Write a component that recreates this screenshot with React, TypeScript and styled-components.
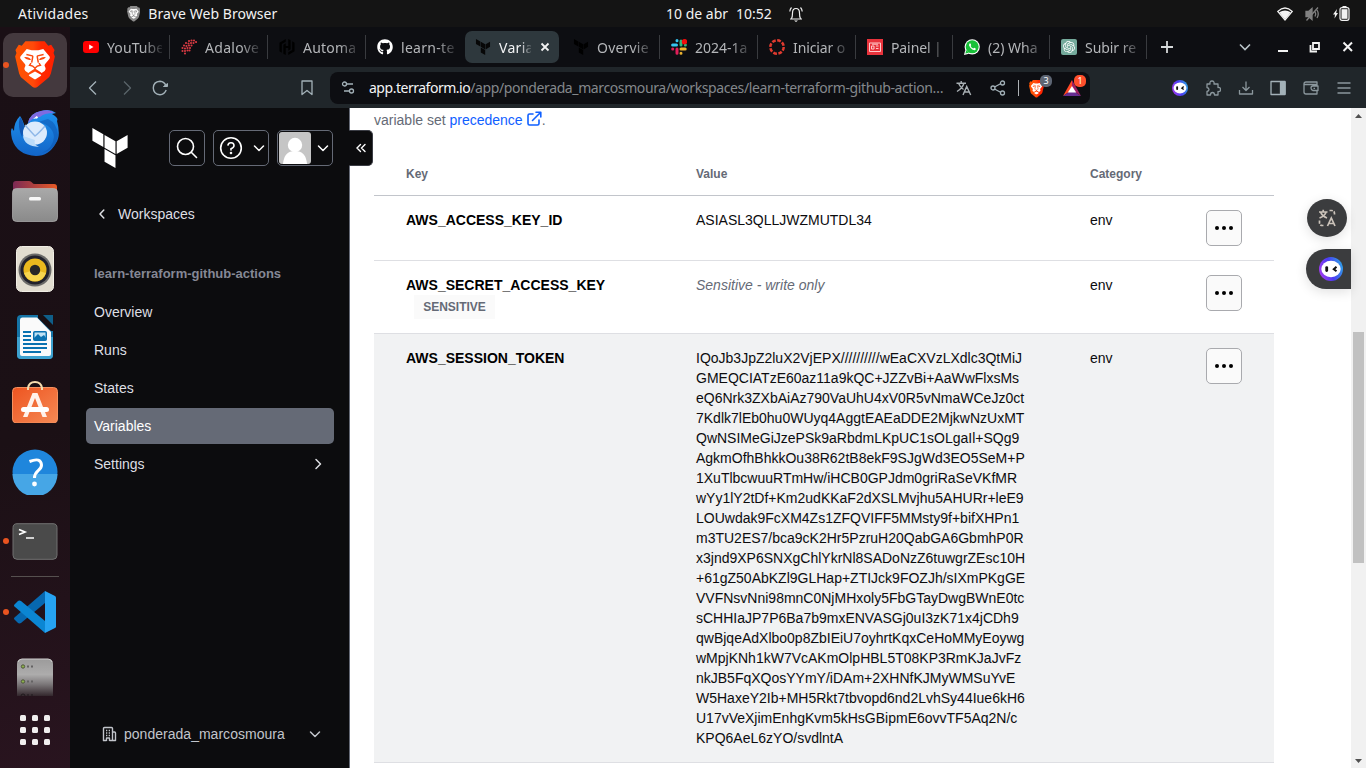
import React from "react";
import styled, { createGlobalStyle } from "styled-components";
import { SiTerraform, SiHashicorp, SiOpenai } from "react-icons/si";
import { FaGithub } from "react-icons/fa";

const uiFont = `"Noto Sans", "Open Sans", sans-serif`;
const pageFont = `"Liberation Sans", Arial, sans-serif`;

const GlobalStyle = createGlobalStyle`
  * { box-sizing: border-box; }
  body { margin: 0; overflow: hidden; background: #141414; }
  svg { display: block; flex: none; }
`;

/* ---------- shell ---------- */

const Desktop = styled.div`
  width: 1366px;
  height: 768px;
  display: flex;
  flex-direction: column;
  overflow: hidden;
  font-family: ${uiFont};
`;

const TopBar = styled.header`
  height: 27px;
  flex: none;
  background: #141414;
  color: #f2f2f2;
  display: grid;
  grid-template-columns: 666px 1fr auto;
  align-items: center;
  font-size: 14px;
`;

const TopLeft = styled.div`
  display: flex;
  align-items: center;
  padding-left: 18px;
`;

const TopText = styled.span<{ $spacing?: number; $width?: number }>`
  letter-spacing: ${(p) => p.$spacing ?? 0}px;
  width: ${(p) => (p.$width ? `${p.$width}px` : "auto")};
  white-space: nowrap;
`;

const AppName = styled.div`
  display: flex;
  align-items: center;
  gap: 8px;
`;

const Clock = styled.div`
  display: flex;
  align-items: center;
`;

const Tray = styled.div`
  display: flex;
  align-items: center;
  gap: 12px;
  padding-right: 16px;
`;

const Workspace = styled.div`
  flex: 1;
  display: flex;
  min-height: 0;
`;

/* ---------- dock ---------- */

const Dock = styled.aside`
  width: 70px;
  flex: none;
  background: linear-gradient(165deg, #1a0f15 0%, #1b1015 55%, #29141f 100%);
  display: flex;
  flex-direction: column;
  padding-top: 4px;
`;

const DockSlot = styled.div<{ $height?: number; $align?: string; $lift?: number }>`
  height: ${(p) => p.$height ?? 68}px;
  flex: none;
  position: relative;
  display: flex;
  align-items: ${(p) => p.$align ?? "center"};
  justify-content: center;
  padding-bottom: ${(p) => p.$lift ?? 0}px;
`;

const DockTile = styled.div`
  width: 64px;
  height: 64px;
  border-radius: 10px;
  background: #44393e;
  display: flex;
  align-items: center;
  justify-content: center;
`;

const RunningDot = styled.i`
  position: absolute;
  left: 3px;
  top: calc(50% - 3px);
  width: 6px;
  height: 6px;
  border-radius: 50%;
  background: #e95420;
`;

const DockRule = styled.div`
  width: 48px;
  height: 1px;
  margin: 1px auto 2px;
  background: #56504f;
`;

const AppsGrid = styled.div`
  display: grid;
  grid-template-columns: repeat(3, 6px);
  gap: 6px;
  i {
    height: 6px;
    border-radius: 1.5px;
    background: #f0eeee;
  }
`;

/* ---------- browser chrome ---------- */

const Browser = styled.div`
  flex: 1;
  min-width: 0;
  display: flex;
  flex-direction: column;
`;

const TabStrip = styled.div`
  height: 40px;
  flex: none;
  background: #0d0e12;
  display: flex;
  align-items: center;
  padding-left: 2px;
`;

const TabItem = styled.div<{ $rule?: boolean; $narrow?: boolean }>`
  width: ${(p) => (p.$narrow ? 97 : 98)}px;
  height: 24px;
  flex: none;
  display: flex;
  align-items: center;
  gap: 8px;
  padding-left: 11px;
  color: #b4b6b9;
  border-right: 1px solid ${(p) => (p.$rule ? "#393b3f" : "transparent")};
`;

const ActiveTab = styled(TabItem)`
  width: 94px;
  height: 32px;
  margin: 0 3px 0 1px;
  padding-left: 10px;
  border: 0;
  border-radius: 7px;
  background: #2e383d;
  color: #f2f3f4;
`;

const TabText = styled.span<{ $width: number; $spacing?: number }>`
  width: ${(p) => p.$width}px;
  flex: none;
  overflow: hidden;
  white-space: nowrap;
  font-size: 14px;
  letter-spacing: ${(p) => p.$spacing ?? 0.2}px;
  -webkit-mask-image: linear-gradient(90deg, #000 65%, rgba(0, 0, 0, 0.15) 100%);
  mask-image: linear-gradient(90deg, #000 65%, rgba(0, 0, 0, 0.15) 100%);
`;

const Favicon = styled.span`
  width: 16px;
  height: 16px;
  flex: none;
  display: flex;
  align-items: center;
  justify-content: center;
`;

const WindowControls = styled.div`
  margin-left: auto;
  display: flex;
  align-items: center;
  padding-right: 12px;
`;

const ToolBar = styled.div`
  height: 41px;
  flex: none;
  background: #20262a;
  color: #a3b1b8;
  display: flex;
  align-items: center;
`;

const NavButtons = styled.div`
  width: 260px;
  display: flex;
  align-items: center;
  padding-left: 15px;
`;

const Gap = styled.span<{ $size?: number }>`
  flex: ${(p) => (p.$size ? `0 0 ${p.$size}px` : "1")};
`;

const AddressBar = styled.div`
  width: 760px;
  height: 32px;
  flex: none;
  border-radius: 8px;
  background: #0d0e12;
  display: flex;
  align-items: center;
  padding-left: 10px;
`;

const Url = styled.div`
  width: 600px;
  flex: none;
  padding-left: 13px;
  font-size: 14px;
  color: #84888c;
  white-space: nowrap;
`;

const Host = styled.span`
  color: #f4f5f6;
  letter-spacing: -0.48px;
`;

const UrlPath = styled.span`
  letter-spacing: -0.39px;
`;

const BarRule = styled.span`
  width: 1px;
  height: 16px;
  flex: none;
  background: #aeb2b5;
  margin: 0 10px 0 12px;
`;

const ShieldWrap = styled.span`
  position: relative;
  display: block;
  flex: none;
  width: 34px;
  height: 24px;
  padding-top: 4px;
`;

const CountBadge = styled.b<{ $color: string }>`
  position: absolute;
  left: 11px;
  top: -1px;
  width: 12px;
  height: 12px;
  border-radius: 5px;
  background: ${(p) => p.$color};
  color: #fff;
  font: 9px/12px ${uiFont};
  text-align: center;
`;

const Extensions = styled.div`
  margin-left: auto;
  display: flex;
  align-items: center;
  gap: 16.8px;
  padding-right: 14px;
`;

/* ---------- page ---------- */

const Page = styled.div`
  flex: 1;
  min-height: 0;
  display: flex;
  position: relative;
  font-family: ${pageFont};
  font-size: 14px;
  line-height: 20px;
`;

const SideNav = styled.nav`
  width: 280px;
  flex: none;
  background: #0c0c0e;
  border-right: 1px solid #656a76;
  color: #dedfe3;
  display: flex;
  flex-direction: column;
  position: relative;
`;

const NavHeader = styled.div`
  display: flex;
  align-items: center;
  padding: 20px 0 0 20px;
`;

const HeaderActions = styled.div`
  display: flex;
  gap: 8px;
  margin-left: 39px;
`;

const HeaderButton = styled.div<{ $wide?: boolean }>`
  width: ${(p) => (p.$wide ? 56 : 36)}px;
  height: 36px;
  border: 1px solid #656a76;
  border-radius: 5px;
  display: flex;
  align-items: center;
  justify-content: ${(p) => (p.$wide ? "space-between" : "center")};
  padding: ${(p) => (p.$wide ? "0 1px 0 5px" : "0")};
  color: #fff;
`;

const UserButton = styled(HeaderButton)`
  padding-left: 1px;
`;

const CollapseTab = styled.div`
  position: absolute;
  left: 279px;
  top: 22px;
  width: 24px;
  height: 36px;
  border: 1px solid #3b3d45;
  border-left: 0;
  border-radius: 0 5px 5px 0;
  background: #0c0c0e;
  display: flex;
  align-items: center;
  justify-content: center;
`;

const BackLink = styled.div`
  display: flex;
  align-items: center;
  gap: 8px;
  padding: 36px 0 0 24px;
`;

const NavTitle = styled.div`
  margin: 41px 0 11px 24px;
  font-size: 13px;
  line-height: 18px;
  font-weight: 700;
  color: #858895;
`;

const NavItem = styled.div<{ $active?: boolean }>`
  height: 36px;
  margin: 0 15px 2px 16px;
  padding: 0 8px;
  border-radius: 5px;
  display: flex;
  align-items: center;
  justify-content: space-between;
  background: ${(p) => (p.$active ? "#656a76" : "transparent")};
  color: ${(p) => (p.$active ? "#fff" : "#dedfe3")};
`;

const OrgSwitcher = styled.div`
  margin-top: auto;
  height: 68px;
  padding: 0 26px 0 32px;
  display: flex;
  align-items: center;
  gap: 6px;
  color: #c2c5cb;
`;

const OrgName = styled.span`
  flex: 1;
  letter-spacing: 0.02px;
`;

const Main = styled.main`
  flex: 1;
  min-width: 0;
  background: #fff;
  padding: 2px 77px 0 24px;
  overflow: hidden;
`;

const Intro = styled.p`
  margin: 0;
  height: 20px;
  display: flex;
  color: #656a76;
  white-space: pre;
`;

const IntroLink = styled.a`
  display: flex;
  gap: 4px;
  color: #1060ff;
  svg {
    margin-top: 1px;
  }
`;

const gridColumns = "290px 394px 116px 1fr";

const TableHead = styled.div`
  display: grid;
  grid-template-columns: ${gridColumns};
  height: 66px;
  padding: 34px 0 0 32px;
  border-bottom: 1px solid #c2c5cb;
  font-size: 12px;
  line-height: 20px;
  font-weight: 700;
  color: #656a76;
`;

const Row = styled.div<{ $shaded?: boolean }>`
  display: grid;
  grid-template-columns: ${gridColumns};
  padding: 14px 0 14px 32px;
  border-bottom: 1px solid #dedfe3;
  background: ${(p) => (p.$shaded ? "#f1f2f3" : "#fff")};
  color: #0c0c0e;
`;

const KeyCell = styled.div`
  font-weight: 700;
  color: #000;
`;

const Badge = styled.div`
  width: 81px;
  height: 24px;
  margin-left: 8px;
  background: #fafafa;
  color: #656a76;
  font-size: 12px;
  line-height: 24px;
  text-align: center;
`;

const ValueCell = styled.div<{ $muted?: boolean }>`
  white-space: pre;
  font-style: ${(p) => (p.$muted ? "italic" : "normal")};
  color: ${(p) => (p.$muted ? "#656a76" : "#0c0c0e")};
`;

const MoreButton = styled.div`
  width: 36px;
  height: 36px;
  border: 1px solid #a9aaae;
  border-radius: 5px;
  background: #fafafa;
  display: flex;
  align-items: center;
  justify-content: center;
`;

const Scrollbar = styled.div`
  width: 15px;
  flex: none;
  background: #f1f1f1;
  display: flex;
  flex-direction: column;
  align-items: center;
  padding: 6px 0 5px;
`;

const Thumb = styled.div`
  width: 11px;
  height: 231px;
  margin-top: 214px;
  margin-bottom: auto;
  background: #c1c1c1;
`;

const TranslateBubble = styled.div`
  position: absolute;
  right: 19px;
  top: 91px;
  width: 40px;
  height: 38px;
  border-radius: 50%;
  background: #3b3c3e;
  display: flex;
  align-items: center;
  justify-content: center;
  box-shadow: 0 3px 12px rgba(0, 0, 0, 0.12);
`;

const BotBubble = styled.div`
  position: absolute;
  right: 15px;
  top: 141px;
  width: 45px;
  height: 40px;
  padding-left: 13px;
  border-radius: 20px 0 0 20px;
  background: #3b3c3e;
  display: flex;
  align-items: center;
  box-shadow: 0 3px 12px rgba(0, 0, 0, 0.12);
`;

/* ---------- drawings ---------- */

function BraveIcon({ height = 48, body = "url(#braveBody)", face = "#fff", ink = "#fb4a0e" }) {
  return (
    <svg width={(height * 40) / 48} height={height} viewBox="0 0 120 145">
      <defs>
        <linearGradient id="braveBody" x1="0" x2="1">
          <stop offset="0" stopColor="#ff5500" />
          <stop offset=".45" stopColor="#ff4a0a" />
          <stop offset=".65" stopColor="#ff2a00" />
          <stop offset="1" stopColor="#ff2000" />
        </linearGradient>
      </defs>
      <path d="M31 1H89L100 14L109 11L119 27L116 36L120 47L108 98Q105 109 96 115L68 138Q60 145 52 138L24 115Q15 109 12 98L0 47L4 36L1 27L11 11L20 14Z" fill={body} />
      <path d="M35 24L50 28H70L85 24L104 47Q107 51 102 56L90 70Q87 74 91 79Q95 86 89 91L80 97L72 91L60 83L48 91L40 97L31 91Q25 86 29 79Q33 74 30 70L18 56Q13 51 16 47Z" fill={face} />
      <path d="M60 92L78 102Q80 104 77 106L64 114Q60 117 56 114L43 106Q40 104 42 102Z" fill={face} />
      <path d="M34 41L52 45Q54 46 53 49L50 65M86 41L68 45Q66 46 67 49L70 65M48 67L44 73Q54 74 60 82Q66 74 76 73L72 67M60 82V90" fill="none" stroke={ink} strokeWidth="4.500" />
      <path d="M27 49Q42 47 48 57Q36 60 27 49ZM93 49Q78 47 72 57Q84 60 93 49Z" fill={ink} />
    </svg>
  );
}

function ThunderbirdIcon() {
  return (
    <svg width="50" height="48" viewBox="0 0 50 48">
      <defs>
        <linearGradient id="tb" x1="0" y1="0" x2="0" y2="1">
          <stop offset="0" stopColor="#1f93ef" />
          <stop offset="1" stopColor="#1265c8" />
        </linearGradient>
      </defs>
      <path d="M10 7Q13 11 15 19L18 14Q20 4 31 2Q40-1 46 4L42 5Q49 9 47 12Q51 27 46 34Q39 47 26 47Q7 46 2 30Q0 21 2 19L4 22Q4 13 10 7Z" fill="url(#tb)" />
      <path d="M10 8Q14 13 14 20L12 28Q7 17 10 8Z" fill="#1157b3" />
      <path d="M18 14Q20 4 31 2Q40 0 44 4Q34 4 30 8Q23 8 18 14Z" fill="#7f6be0" />
      <path d="M28 13Q43 16 44 28Q43 39 32 44Q47 40 48 26Q47 14 38 10Z" fill="#0d55b0" opacity=".55" />
      <ellipse cx="25" cy="24" rx="12" ry="11.500" fill="#dcebfc" />
      <path d="M13 27Q14 37 29 38Q23 35 25 31Z" fill="#bcdcfa" />
      <path d="M15 16Q22 24 25 27Q29 24 35 17" fill="none" stroke="#8eb7e8" strokeWidth="1.400" />
      <path d="M23 10L27 7L28 9Z" fill="#fff" />
      <circle cx="26.500" cy="8.500" r="1" fill="#fff" />
    </svg>
  );
}

function FilesIcon() {
  return (
    <svg width="46" height="42" viewBox="0 0 46 42">
      <defs>
        <linearGradient id="fb" x1="0" x2="1">
          <stop offset="0" stopColor="#7b2a55" />
          <stop offset="1" stopColor="#e85a26" />
        </linearGradient>
        <linearGradient id="ff" x1="0" y1="0" x2="0" y2="1">
          <stop offset="0" stopColor="#a9a9a9" />
          <stop offset="1" stopColor="#8a8a8a" />
        </linearGradient>
      </defs>
      <path d="M1 4Q1 1 4 1H17Q19 1 20 2.500T23 4H42Q45 4 45 7V20H1Z" fill="url(#fb)" />
      <rect x=".5" y="8.500" width="45" height="33" rx="4" fill="url(#ff)" stroke="#b5b5b5" strokeWidth=".7" />
      <rect x="17" y="17" width="12" height="3.500" rx="1.500" fill="#f8f8f8" />
    </svg>
  );
}

function SpeakerIcon() {
  return (
    <svg width="38" height="46" viewBox="0 0 38 46">
      <rect x=".5" y=".5" width="37" height="45" rx="5" fill="#e2ddd0" stroke="#f1eee5" />
      <circle cx="19" cy="24" r="16.500" fill="#6c6b69" />
      <circle cx="19" cy="24" r="14.500" fill="#22222c" />
      <circle cx="19" cy="24" r="11.500" fill="#eab91e" />
      <path d="M8 27A11.500 11.500 0 0030 27L19 24Z" fill="#f7d64e" />
      <circle cx="19" cy="24" r="5.200" fill="#272727" />
    </svg>
  );
}

function WriterIcon() {
  return (
    <svg width="38" height="46" viewBox="0 0 38 46">
      <rect x="1" y="1" width="36" height="44" rx="4" fill="#1574a6" />
      <path d="M1 23H37V41Q37 45 33 45H5Q1 45 1 41Z" fill="#3da1cf" />
      <path d="M4 6Q4 3.500 6.500 3.500H21L35 18V40Q35 42 33 42H6Q4 42 4 40Z" fill="#fafafa" />
      <path d="M22 0H29L38 10V17L35 17L22 4Z" fill="#170f14" />
      <path d="M27 1H37V11Z" fill="#0f5e88" />
      <path d="M7 18H15M7 22H15M7 26H15M7 30H31M7 34H31M7 38H25" stroke="#0a72b0" strokeWidth="2" />
      <rect x="17.750" y="17.750" width="12.500" height="8.500" rx="1" fill="#bfe2f4" stroke="#0a72b0" strokeWidth="1.500" />
      <path d="M18 26V24L22 20L25 23L28 21L30 24V26Z" fill="#0a72b0" />
    </svg>
  );
}

function SoftwareIcon() {
  return (
    <svg width="46" height="42" viewBox="0 0 46 42">
      <defs>
        <linearGradient id="sw" x1="0" y1="0" x2="1" y2="1">
          <stop offset="0" stopColor="#ee5420" />
          <stop offset="1" stopColor="#f58a55" />
        </linearGradient>
      </defs>
      <rect x=".5" y="6.500" width="45" height="35.500" rx="4" fill="url(#sw)" stroke="#f5915f" />
      <path d="M16 9V7Q17 1 23 1T30 7V9" fill="none" stroke="#f6dcae" strokeWidth="2" />
      <path d="M20.500 12H25.500L35 36H30.500L23 17L15.500 36H11Z" fill="#fff1ea" />
      <rect x="9" y="26" width="28" height="5" rx="2.500" fill="#fff" />
    </svg>
  );
}

function HelpDockIcon() {
  return (
    <svg width="46" height="46" viewBox="0 0 46 46">
      <circle cx="23" cy="23" r="22.500" fill="#1f86dc" />
      <path d="M.5 25A22.500 22.500 0 0045.500 25Z" fill="#46a6e6" />
      <path d="M17.500 12.500Q29 8 29.500 16C29.500 22 22.500 21 22.500 29" fill="none" stroke="#fff" strokeWidth="3" />
      <circle cx="22.500" cy="35" r="2.400" fill="#fff" />
    </svg>
  );
}

function TerminalIcon() {
  return (
    <svg width="46" height="37" viewBox="0 0 46 37">
      <rect x="1" y=".7" width="44" height="35.600" rx="4" fill="#4a4a4a" stroke="#717171" />
      <path d="M7 6.500L13 9L7 11.500" fill="none" stroke="#fff" strokeWidth="1.700" />
      <path d="M14 15H22" stroke="#fff" strokeWidth="1.500" />
    </svg>
  );
}

function CodeIcon() {
  return (
    <svg width="42" height="42" viewBox="0 0 42 42">
      <path d="M31 0V12L7 32Q5 33 3.500 31.500L.5 28.500Q-.5 27.500 .5 26.500Z" fill="#0768b0" />
      <path d="M31 42V30L7 10Q5 9 3.500 10.500L.5 13.500Q-.5 14.500 .5 15.500Z" fill="#0b86d3" />
      <path d="M31 0L41 5Q42 5.500 42 6.500V35.500Q42 36.500 41 37L31 42Z" fill="#26a3f2" />
    </svg>
  );
}

function DriveIcon() {
  return (
    <svg width="38" height="38" viewBox="0 0 38 38">
      <defs>
        <linearGradient id="dr" x1="0" y1="0" x2="0" y2="1">
          <stop offset="0" stopColor="#9c9b9b" />
          <stop offset=".42" stopColor="#adacac" />
          <stop offset=".68" stopColor="#7c787a" />
          <stop offset="1" stopColor="#33272d" />
        </linearGradient>
      </defs>
      <path d="M1 38V6Q1 1 6 1H32Q37 1 37 6V38Z" fill="url(#dr)" />
      <path d="M2 4Q3 1 6 1H32Q35 1 36 4" fill="none" stroke="#cfcfcf" />
      <g fill="#8cb24a" stroke="#50553f">
        <circle cx="7" cy="8.500" r="1.700" />
        <circle cx="7" cy="23.500" r="1.700" />
      </g>
      <path d="M11 8.500H13M15 8.500H17M11 23.500H13M15 23.500H17" stroke="#646263" strokeWidth="2" />
      <path d="M5 38A2 2 0 019 38M11 37H13M15 37H17" stroke="#1f191c" fill="none" />
    </svg>
  );
}

function SlackIcon() {
  return (
    <svg width="16" height="16" viewBox="0 0 16 16" strokeLinecap="round" strokeWidth="3">
      <path d="M1.600 6H5.500M6 1.600V1.700" stroke="#36c5f0" />
      <path d="M10 2V6M14.400 6H14.300" stroke="#2eb67d" />
      <path d="M6 10V14.200M1.700 10H1.800" stroke="#e01e5a" />
      <path d="M10 10H14.200M10 14.200V14.300" stroke="#ecb22e" />
      <circle cx="13.500" cy="2.700" r="2.700" fill="#f30b0b" />
    </svg>
  );
}

function AdaloveIcon() {
  const dots = [
    [8, 2], [10.5, 1.5], [13, 1.5], [15, 3], [5, 4], [7.5, 4.5], [10, 4], [12.5, 4],
    [3, 6.5], [5.5, 7], [8, 6.5], [10.5, 6.5], [1.5, 9], [4, 9.5], [6.5, 9], [9, 9],
    [1.5, 12], [4, 12], [6.5, 11.5], [8.5, 11.5], [4, 14.5],
  ];
  return (
    <svg width="16" height="16" viewBox="0 0 16 16" fill="#d63a43">
      {dots.map(([x, y]) => <circle key={`${x}-${y}`} cx={x} cy={y} r="1.050" />)}
    </svg>
  );
}

function BotFace({ size }: { size: number }) {
  return (
    <svg width={size} height={size} viewBox="0 0 24 24">
      <defs>
        <linearGradient id="bot" x1="0" y1=".7" x2="1" y2=".4">
          <stop offset="0" stopColor="#a63bf0" />
          <stop offset=".5" stopColor="#4b3df2" />
          <stop offset="1" stopColor="#2f9de8" />
        </linearGradient>
      </defs>
      <circle cx="12" cy="12" r="12" fill="url(#bot)" />
      <ellipse cx="12" cy="12" rx="9.700" ry="8.200" fill="#fff" />
      <rect x="6.300" y="9.300" width="2.800" height="5.600" rx="1.300" fill="#111" />
      <path d="M17.500 9.800L14.800 12.200L17.500 14.200" fill="none" stroke="#111" strokeWidth="2" />
    </svg>
  );
}

function Chevron({ dir, size = 16, color = "currentColor", width = 1.5 }: { dir: "l" | "r" | "d"; size?: number; color?: string; width?: number }) {
  const paths = { l: "M9.800 4L6 8L9.800 12", r: "M6 3.500L10.500 8L6 12.500", d: "M3.500 6L8 10.500L12.500 6" };
  return (
    <svg width={size} height={size} viewBox="0 0 16 16">
      <path d={paths[dir]} fill="none" stroke={color} strokeWidth={width} strokeLinecap="round" strokeLinejoin="round" />
    </svg>
  );
}

function Line({ d, size = 16, color = "currentColor", width = 1.3, children }: { d: string; size?: number; color?: string; width?: number; children?: React.ReactNode }) {
  return (
    <svg width={size} height={size} viewBox="0 0 16 16" fill="none" stroke={color} strokeWidth={width} strokeLinejoin="round">
      <path d={d} />
      {children}
    </svg>
  );
}

function TranslateIcon() {
  return (
    <svg width="16" height="16" viewBox="0 0 16 16" fill="none" stroke="#a9b0b4" strokeWidth="1.400">
      <path d="M.5 3.200H10M5.200 1V3.200M8 3.200Q6.500 8 1 11.500M2.600 3.500Q4.500 7.500 7.500 9.500M7 15L10.700 6.500L14.700 15M8.300 12H13.300" />
    </svg>
  );
}

function TranslateSwapIcon() {
  return (
    <svg width="18" height="18" viewBox="0 0 18 18" fill="none" stroke="#cbc3ba" strokeWidth="1.700">
      <path d="M1 3H9.500M5.200 .8V3M8 3Q7 7 1.500 9M2.700 3.500Q4.500 7.500 9 9M9.500 17L13.300 9L17 17M10.800 14.500H15.800" />
      <path d="M11.500 1.500H13.500Q16.500 1.500 16.500 4.500V6.500M1.500 11.500V13.500Q1.500 16.500 4.500 16.500H6.500" strokeDasharray="3.200 1.300" />
    </svg>
  );
}

/* ---------- data ---------- */

type TabData = { id: string; text: string; icon: React.ReactNode; rule?: boolean; active?: boolean; narrow?: boolean; spacing?: number };

const tabs: TabData[] = [
  {
    id: "yt", text: "YouTube", rule: true, spacing: 0.1,
    icon: <svg width="16" height="12" viewBox="0 0 16 12"><rect width="16" height="12" rx="3" fill="#f00" /><path d="M6.200 3.500L10.500 6L6.200 8.500Z" fill="#fff" /></svg>,
  },
  { id: "ada", text: "Adalove", rule: true, icon: <AdaloveIcon />, spacing: 0.3 },
  { id: "auto", text: "Automa", rule: true, icon: <SiHashicorp size={16} color="#000" /> },
  { id: "gh", text: "learn-te", icon: <FaGithub size={16} color="#fff" />, spacing: 0.3 },
  { id: "var", text: "Varia", active: true, icon: <SiTerraform size={16} color="#070707" />, spacing: 0.3 },
  { id: "ov", text: "Overvie", rule: true, icon: <SiTerraform size={16} color="#000" /> },
  { id: "slack", text: "2024-1a", rule: true, icon: <SlackIcon />, spacing: 0 },
  {
    id: "canvas", text: "Iniciar o", rule: true, spacing: -0.1,
    icon: <svg width="16" height="16" viewBox="0 0 16 16"><circle cx="8" cy="8" r="6.700" fill="none" stroke="#e03a2f" strokeWidth="2.500" strokeDasharray="3.760 1.500" /></svg>,
  },
  {
    id: "painel", text: "Painel |", rule: true, narrow: true, spacing: -0.1,
    icon: <svg width="16" height="16" viewBox="0 0 16 16"><rect width="16" height="16" fill="#e8333c" /><path d="M2.500 4H13.500V12.500H2.500ZM4.500 7H7V10H4.500ZM9 7H11.500M9 9.500H11.500M5 5.200H11" fill="none" stroke="#ffc9c9" /></svg>,
  },
  {
    id: "wa", text: "(2) Wha", rule: true, narrow: true, spacing: 0,
    icon: <svg width="16" height="16" viewBox="0 0 16 16"><circle cx="8.200" cy="7.800" r="7.600" fill="#fff" /><path d="M0 16L1.300 11L5 14.700Z" fill="#fff" /><circle cx="8.200" cy="7.800" r="6.500" fill="#18c139" /><path d="M1.400 14.600L2.300 11L5 13.700Z" fill="#18c139" /><path d="M5.400 4.500Q4.200 6 6.200 8.500T10.500 11.200Q12.200 11 11.700 9.500L10.200 8.700L9.300 9.600Q7.200 8.600 6.600 7L7.200 6.200L6.600 4.500Z" fill="#fff" /></svg>,
  },
  {
    id: "ai", text: "Subir re", rule: true, narrow: true, spacing: -0.05,
    icon: <svg width="16" height="16" viewBox="0 0 16 16"><rect width="16" height="16" rx="2" fill="#74aa9c" /><SiOpenai x={2} y={2} size={12} color="#fff" /></svg>,
  },
];

const navItems = ["Overview", "Runs", "States", "Variables", "Settings"];

const sessionToken = [
  "IQoJb3JpZ2luX2VjEPX//////////wEaCXVzLXdlc3QtMiJ",
  "GMEQCIATzE60az11a9kQC+JZZvBi+AaWwFlxsMs",
  "eQ6Nrk3ZXbAiAz790VaUhU4xV0R5vNmaWCeJz0ct",
  "7Kdlk7lEb0hu0WUyq4AggtEAEaDDE2MjkwNzUxMT",
  "QwNSIMeGiJzePSk9aRbdmLKpUC1sOLgaIl+SQg9",
  "AgkmOfhBhkkOu38R62tB8ekF9SJgWd3EO5SeM+P",
  "1XuTlbcwuuRTmHw/iHCB0GPJdm0griRaSeVKfMR",
  "wYy1lY2tDf+Km2udKKaF2dXSLMvjhu5AHURr+leE9",
  "LOUwdak9FcXM4Zs1ZFQVIFF5MMsty9f+bifXHPn1",
  "m3TU2ES7/bca9cK2Hr5PzruH20QabGA6GbmhP0R",
  "x3jnd9XP6SNXgChlYkrNl8SADoNzZ6tuwgrZEsc10H",
  "+61gZ50AbKZl9GLHap+ZTIJck9FOZJh/sIXmPKgGE",
  "VVFNsvNni98mnC0NjMHxoly5FbGTayDwgBWnE0tc",
  "sCHHIaJP7P6Ba7b9mxENVASGj0uI3zK71x4jCDh9",
  "qwBjqeAdXlbo0p8ZbIEiU7oyhrtKqxCeHoMMyEoywg",
  "wMpjKNh1kW7VcAKmOlpHBL5T08KP3RmKJaJvFz",
  "nkJB5FqXQosYYmY/iDAm+2XHNfKJMyWMSuYvE",
  "W5HaxeY2Ib+MH5Rkt7tbvopd6nd2LvhSy44Iue6kH6",
  "U17vVeXjimEnhgKvm5kHsGBipmE6ovvTF5Aq2N/c",
  "KPQ6AeL6zYO/svdlntA",
].join("\n");

const variables = [
  { name: "AWS_ACCESS_KEY_ID", value: "ASIASL3QLLJWZMUTDL34" },
  { name: "AWS_SECRET_ACCESS_KEY", value: "Sensitive - write only", sensitive: true },
  { name: "AWS_SESSION_TOKEN", value: sessionToken, shaded: true },
];

/* ---------- sections ---------- */

function SystemBar() {
  return (
    <TopBar>
      <TopLeft>
        <TopText $width={109} $spacing={0.25}>Atividades</TopText>
        <AppName>
          <BraveIcon height={16} body="#8b8b8b" face="#fff" ink="#6b6b6b" />
          <TopText $spacing={0.05}>Brave Web Browser</TopText>
        </AppName>
      </TopLeft>
      <Clock>
        <TopText $width={70}>10 de abr</TopText>
        <TopText $width={52}>10:52</TopText>
        <svg width="16" height="16" viewBox="0 0 16 16" fill="none" stroke="#f2f2f2" strokeWidth="1.200">
          <path d="M2 13H14M3.500 12.500Q4.500 11 4.500 7Q4.500 2.500 8 2.500T11.500 7Q11.500 11 12.500 12.500M3.500 1.500Q2 3 1.800 5.500M12.500 1.500Q14 3 14.200 5.500" />
          <path d="M6 14.500H10L8 16Z" fill="#f2f2f2" stroke="none" />
        </svg>
      </Clock>
      <Tray>
        <svg width="16" height="14" viewBox="0 0 16 14">
          <path d="M.7 4.500Q8-2.500 15.300 4.500L8 13Z" fill="none" stroke="#f2f2f2" strokeWidth="1.200" />
          <path d="M2.200 5.300Q8 1.800 13.800 5.300L8 12.500Z" fill="#f2f2f2" />
        </svg>
        <svg width="16" height="14" viewBox="0 0 16 14" fill="none" stroke="#818181" strokeWidth="1.300">
          <path d="M1 4.500H3.500L7 1.500V12.500L3.500 9.500H1Z" fill="#818181" />
          <path d="M10 4.500Q11.500 7 10 9.500M12 3Q14.500 7 12 11M1.500 13.500L13 .5" />
        </svg>
        <svg width="17" height="15" viewBox="0 0 17 15" fill="#f2f2f2">
          <path d="M4 3L0 8.500H2L1.500 12.500L5 7H3.200Z" />
          <rect x="7" y="1.700" width="9" height="12.600" rx="2" fill="none" stroke="#f2f2f2" strokeWidth="1.200" />
          <rect x="8.500" y="3.200" width="6" height="9.600" />
          <rect x="9.500" y="0" width="4" height="2" />
        </svg>
      </Tray>
    </TopBar>
  );
}

function DockBar() {
  return (
    <Dock>
      <DockSlot><DockTile><BraveIcon /></DockTile><RunningDot /></DockSlot>
      <DockSlot><ThunderbirdIcon /></DockSlot>
      <DockSlot><FilesIcon /></DockSlot>
      <DockSlot><SpeakerIcon /></DockSlot>
      <DockSlot><WriterIcon /></DockSlot>
      <DockSlot $height={66} $lift={4}><SoftwareIcon /></DockSlot>
      <DockSlot $height={70}><HelpDockIcon /></DockSlot>
      <DockSlot $height={68}><TerminalIcon /><RunningDot /></DockSlot>
      <DockRule />
      <DockSlot $height={66}><CodeIcon /><RunningDot /></DockSlot>
      <DockSlot $height={51} $align="flex-end"><DriveIcon /></DockSlot>
      <DockSlot $height={68}><AppsGrid>{Array.from({ length: 9 }, (_, i) => <i key={i} />)}</AppsGrid></DockSlot>
    </Dock>
  );
}

function Tabs() {
  return (
    <TabStrip>
      {tabs.map((t) =>
        t.active ? (
          <ActiveTab key={t.id}>
            <Favicon>{t.icon}</Favicon>
            <TabText $width={32} $spacing={t.spacing}>{t.text}</TabText>
            <Line d="M2.500 4.500L9.500 11.500M9.500 4.500L2.500 11.500" width={1.8} color="#f2f2f2" />
          </ActiveTab>
        ) : (
          <TabItem key={t.id} $rule={t.rule} $narrow={t.narrow}>
            <Favicon>{t.icon}</Favicon>
            <TabText $width={55} $spacing={t.spacing}>{t.text}</TabText>
          </TabItem>
        )
      )}
      <svg width="40" height="14" viewBox="0 0 40 14"><path d="M14 7H26M20 1V13" stroke="#d6d9da" strokeWidth="1.800" /></svg>
      <WindowControls>
        <svg width="126" height="16" viewBox="0 0 126 16" fill="none" stroke="#f2f2f2" strokeWidth="2">
          <path d="M12 5.500L17 10.500L22 5.500" stroke="#b9c3c8" strokeWidth="1.600" />
          <path d="M50 12H60" />
          <path d="M85 4H91V10H85ZM82.500 6V12.500H89" strokeWidth="1.800" />
          <path d="M115.500 3.500L124 12M124 3.500L115.500 12" />
        </svg>
      </WindowControls>
    </TabStrip>
  );
}

function Toolbar() {
  return (
    <ToolBar>
      <NavButtons>
        <Line d="M11 1.500L4.500 8L11 14.500" />
        <Gap $size={18} />
        <Line d="M5 1.500L11.500 8L5 14.500" color="#59646a" />
        <Gap $size={17} />
        <svg width="17" height="16" viewBox="0 0 17 16"><path d="M14.200 10Q12.500 14.500 8 14.700Q1.500 14.300 1.300 8Q1.500 1.700 8 1.300Q12.500 1.500 14 6" fill="none" stroke="#a3b1b8" strokeWidth="1.400" /><path d="M11.500 6.500H15.500V3.500Z" fill="#a3b1b8" stroke="#a3b1b8" /></svg>
        <Gap />
        <Line d="M3 1H13V14.500L8 10.500L3 14.500Z" />
        <Gap $size={15} />
      </NavButtons>
      <AddressBar>
        <Line d="M7 4H13M4 11H9">
          <circle cx="4.500" cy="4" r="2" />
          <circle cx="11.500" cy="11" r="2" />
        </Line>
        <Url><Host>app.terraform.io</Host><UrlPath>/app/ponderada_marcosmoura/workspaces/learn-terraform-github-action…</UrlPath></Url>
        <TranslateIcon />
        <Gap $size={18} />
        <Line d="M4.500 7L11 3.500M4.500 9L11 12.500">
          <circle cx="3" cy="8" r="2" />
          <circle cx="12.500" cy="3" r="2" />
          <circle cx="12.500" cy="13" r="2" />
        </Line>
        <BarRule />
        <ShieldWrap><BraveIcon height={18} /><CountBadge $color="#5d6573">3</CountBadge></ShieldWrap>
        <ShieldWrap>
          <svg width="18" height="16" viewBox="0 0 18 16"><path d="M9 0L0 16L9 10Z" fill="#ff4724" /><path d="M0 16H18L9 10Z" fill="#662d91" /><path d="M9 0L18 16L9 10Z" fill="#9e1f63" /><path d="M9 6L4.800 12.500H13.200Z" fill="#fff" /></svg>
          <CountBadge $color="#ff4f2b">1</CountBadge>
        </ShieldWrap>
      </AddressBar>
      <Extensions>
        <BotFace size={16} />
        <Line d="M2 4H5Q4.500 1 7 1T9 4H13V7.500Q15.500 7 15.500 9.500T13 11.500V15H9.500Q9.500 12.500 7.500 12.500T5.500 15H2V11.500Q4 11 4 9.500T2 7.500Z" color="#8b979d" />
        <Line d="M8 1.500V10M4.500 7L8 10.500L11.500 7M1.500 10V14H14.500V10" color="#8b979d" />
        <Line d="M1 1.500H15V14.500H1Z" color="#a3b1b8"><path d="M10.500 2H15V14H10.500Z" fill="#a3b1b8" /></Line>
        <Line d="M14 5V2H3Q1 2 1 4V12Q1 14 3 14H14V11M1 4.500H14.500M15 6H10Q8 6 8 8T10 10.500H15ZM10.500 8.300H12" color="#8b979d" />
        <Line d="M1.500 3H14.500M1.500 8H14.500M1.500 13H14.500" color="#8b979d" />
      </Extensions>
    </ToolBar>
  );
}

function Sidebar() {
  return (
    <SideNav>
      <NavHeader>
        <SiTerraform size={40} color="#fff" />
        <HeaderActions>
          <HeaderButton>
            <svg width="22" height="22" viewBox="0 0 22 22" fill="none" stroke="#fff" strokeWidth="1.600" strokeLinecap="round"><circle cx="9.500" cy="9.500" r="8" /><path d="M15.500 15.500L20.500 20.500" /></svg>
          </HeaderButton>
          <HeaderButton $wide>
            <svg width="24" height="24" viewBox="0 0 24 24" fill="none" stroke="#fff" strokeWidth="1.600"><circle cx="12" cy="12" r="10.300" /><path d="M9 9Q9.500 6.500 12.200 6.700Q15 7 15 9.500Q15 11.500 12 12.800V14" strokeLinecap="round" /><circle cx="12" cy="17" r=".5" /></svg>
            <Chevron dir="d" color="#fff" />
          </HeaderButton>
          <UserButton $wide>
            <svg width="32" height="32" viewBox="0 0 32 32"><rect width="32" height="32" rx="3" fill="#c5c5c5" /><circle cx="16" cy="13" r="7.200" fill="#fff" /><path d="M4 32Q5 19 16 19T28 32Z" fill="#fff" /></svg>
            <Chevron dir="d" color="#fff" />
          </UserButton>
        </HeaderActions>
      </NavHeader>
      <CollapseTab>
        <svg width="10" height="10" viewBox="0 0 10 10" fill="none" stroke="#fff" strokeWidth="1.400" strokeLinecap="round"><path d="M4.500 1.500L1 5L4.500 8.500M9 1.500L5.500 5L9 8.500" /></svg>
      </CollapseTab>
      <BackLink><Chevron dir="l" />Workspaces</BackLink>
      <NavTitle>learn-terraform-github-actions</NavTitle>
      {navItems.map((item) => (
        <NavItem key={item} $active={item === "Variables"}>
          {item}
          {item === "Settings" && <Chevron dir="r" />}
        </NavItem>
      ))}
      <OrgSwitcher>
        <Line d="M1.500 15V2.500Q1.500 1.500 2.500 1.500H9.500Q10.500 1.500 10.500 2.500V15M10.500 6H12.500Q13.500 6 13.500 7V14.500H10.500M4.500 15V12H7.500V15M1 14.500H4.500M7.500 14.500H10.500M4 4.500H5.300M6.700 4.500H8M4 7H5.300M6.700 7H8M4 9.500H5.300M6.700 9.500H8" width={1.4} />
        <OrgName>ponderada_marcosmoura</OrgName>
        <Chevron dir="d" />
      </OrgSwitcher>
    </SideNav>
  );
}

function VariablesTable() {
  return (
    <Main>
      <Intro>
        variable set <IntroLink>precedence
          <svg width="15" height="16" viewBox="0 0 15 16" fill="none" stroke="#1060ff" strokeWidth="1.600" strokeLinecap="round" strokeLinejoin="round"><path d="M6 3H2.500Q1 3 1 4.500V12.500Q1 14 2.500 14H10.500Q12 14 12 12.500V9M9 1.200H13.800V6M13.500 1.500L5.500 9.500" /></svg>
        </IntroLink>.
      </Intro>
      <TableHead><span>Key</span><span>Value</span><span>Category</span></TableHead>
      {variables.map((v) => (
        <Row key={v.name} $shaded={v.shaded}>
          <KeyCell>{v.name}{v.sensitive && <Badge>SENSITIVE</Badge>}</KeyCell>
          <ValueCell $muted={v.sensitive}>{v.value}</ValueCell>
          <span>env</span>
          <MoreButton>
            <svg width="18" height="4" viewBox="0 0 18 4"><circle cx="2" cy="2" r="2" /><circle cx="9" cy="2" r="2" /><circle cx="16" cy="2" r="2" /></svg>
          </MoreButton>
        </Row>
      ))}
    </Main>
  );
}

export default function App() {
  return (
    <Desktop>
      <GlobalStyle />
      <SystemBar />
      <Workspace>
        <DockBar />
        <Browser>
          <Tabs />
          <Toolbar />
          <Page>
            <Sidebar />
            <VariablesTable />
            <Scrollbar>
              <svg width="7" height="4" viewBox="0 0 7 4"><path d="M0 4L3.500 0L7 4Z" fill="#505050" /></svg>
              <Thumb />
              <svg width="7" height="4" viewBox="0 0 7 4"><path d="M0 0L3.500 4L7 0Z" fill="#505050" /></svg>
            </Scrollbar>
            <TranslateBubble><TranslateSwapIcon /></TranslateBubble>
            <BotBubble><BotFace size={24} /></BotBubble>
          </Page>
        </Browser>
      </Workspace>
    </Desktop>
  );
}
